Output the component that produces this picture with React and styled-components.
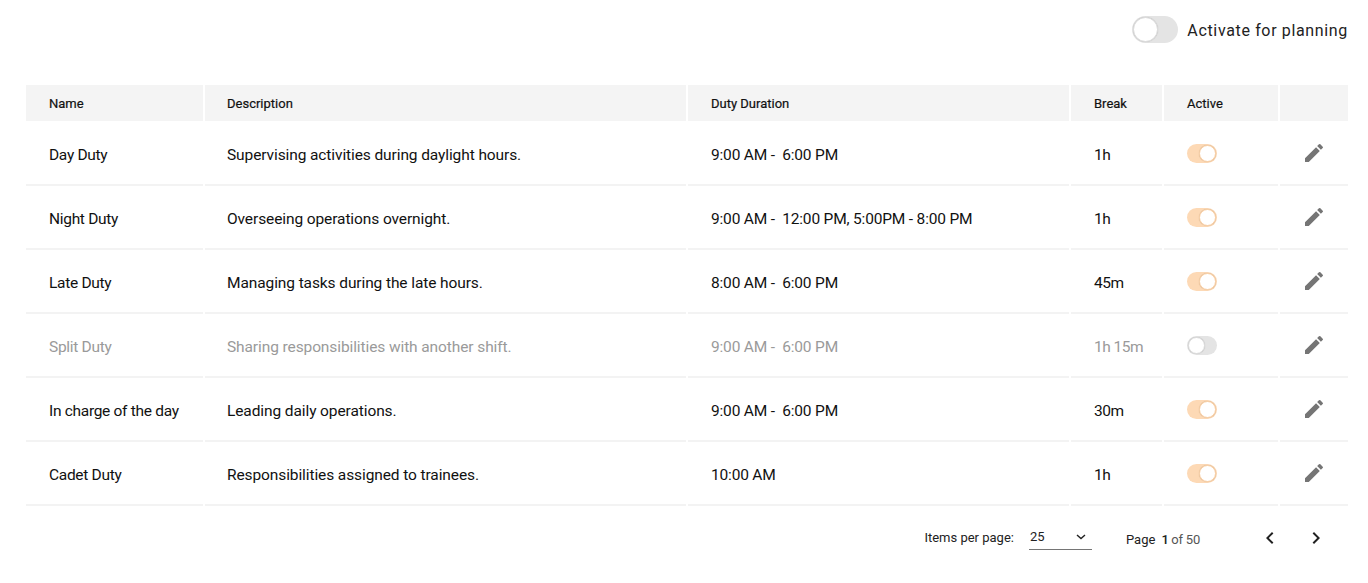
import styled, { createGlobalStyle } from 'styled-components';

const duties = [
  { name: 'Day Duty', description: 'Supervising activities during daylight hours.', duration: '9:00 AM -  6:00 PM', pause: '1h', active: true },
  { name: 'Night Duty', description: 'Overseeing operations overnight.', duration: '9:00 AM -  12:00 PM, 5:00PM - 8:00 PM', pause: '1h', active: true },
  { name: 'Late Duty', description: 'Managing tasks during the late hours.', duration: '8:00 AM -  6:00 PM', pause: '45m', active: true },
  { name: 'Split Duty', description: 'Sharing responsibilities with another shift.', duration: '9:00 AM -  6:00 PM', pause: '1h 15m', active: false },
  { name: 'In charge of the day', description: 'Leading daily operations.', duration: '9:00 AM -  6:00 PM', pause: '30m', active: true },
  { name: 'Cadet Duty', description: 'Responsibilities assigned to trainees.', duration: '10:00 AM', pause: '1h', active: true },
];

const PencilIcon = () => (
  <svg width="24" height="24" viewBox="0 0 24 24" fill="#757575">
    <path d="M3 17.25V21h3.75L17.81 9.94l-3.75-3.75L3 17.25zM20.71 7.04a1 1 0 0 0 0-1.41l-2.34-2.34a1 1 0 0 0-1.41 0l-1.83 1.83 3.75 3.75 1.83-1.83z" />
  </svg>
);

const Chevron = ({ dir }) => (
  <svg width="24" height="24" viewBox="0 0 24 24" fill="#212121">
    <path d={dir === 'left' ? 'M15.41 7.41 14 6l-6 6 6 6 1.41-1.41L10.83 12z' : 'M8.59 16.59 10 18l6-6-6-6-1.41 1.41L13.17 12z'} />
  </svg>
);

const App = () => {
  return (
    <>
      <GlobalStyle />
      <Page>
        <TopBar>
          <Toggle $large />
          <ToggleLabel>Activate for planning</ToggleLabel>
        </TopBar>
        <Table>
          <HeadCell>Name</HeadCell>
          <HeadCell $inset={22}>Description</HeadCell>
          <HeadCell>Duty Duration</HeadCell>
          <HeadCell>Break</HeadCell>
          <HeadCell>Active</HeadCell>
          <HeadCell />
          {duties.map((duty) => (
            <Row key={duty.name}>
              <TextCell $muted={!duty.active} $track={-0.3}>{duty.name}</TextCell>
              <TextCell $muted={!duty.active} $track={-0.1} $inset={22}>{duty.description}</TextCell>
              <TextCell $muted={!duty.active} $track={-0.18}>{duty.duration}</TextCell>
              <TextCell $muted={!duty.active} $track={-0.5}>{duty.pause}</TextCell>
              <Cell><Toggle $on={duty.active} /></Cell>
              <Cell $inset={22}><PencilIcon /></Cell>
            </Row>
          ))}
        </Table>
        <Pager>
          <PagerLabel>Items per page:</PagerLabel>
          <PageSelect>
            <span>25</span>
            <svg width="12" height="12" viewBox="0 0 12 12" fill="none" stroke="#212121" strokeWidth="1.4">
              <path d="M2 4l4 3.6L10 4" />
            </svg>
          </PageSelect>
          <PageInfo>
            Page <b>1</b> <span>of 50</span>
          </PageInfo>
          <PagerArrows>
            <Chevron dir="left" />
            <Chevron dir="right" />
          </PagerArrows>
        </Pager>
      </Page>
    </>
  );
};

const GlobalStyle = createGlobalStyle`
  body {
    margin: 0;
    background: #fff;
    font-family: Roboto, "Liberation Sans", sans-serif;
    color: #111;
  }
`;

const Page = styled.div`
  width: 1368px;
  height: 583px;
  padding: 16px 20px 0 26px;
  box-sizing: border-box;
  overflow: hidden;
`;

const TopBar = styled.div`
  display: flex;
  justify-content: flex-end;
  align-items: center;
  gap: 9px;
  height: 27px;
  margin-bottom: 42px;
`;

const ToggleLabel = styled.span`
  font-size: 16px;
  letter-spacing: 0.65px;
  color: #222;
  padding-top: 2px;
`;

const Toggle = styled.span`
  position: relative;
  display: inline-block;
  flex: none;
  width: ${(p) => (p.$large ? 46 : 30)}px;
  height: ${(p) => (p.$large ? 27 : 19)}px;
  border-radius: 14px;
  background: ${(p) => (p.$on ? '#fdd9b5' : '#e4e4e4')};

  &::after {
    content: '';
    position: absolute;
    box-sizing: border-box;
    top: 1px;
    left: ${(p) => (p.$on ? 'auto' : '1px')};
    right: ${(p) => (p.$on ? '1px' : 'auto')};
    width: ${(p) => (p.$large ? 25 : 17)}px;
    height: ${(p) => (p.$large ? 25 : 17)}px;
    border-radius: 50%;
    background: #fff;
    box-shadow: 0 0 1px rgba(0, 0, 0, 0.2);
    border: 0.5px solid ${(p) => (p.$on ? '#fbcfa2' : '#dcdcdc')};
  }
`;

const Table = styled.div`
  display: grid;
  grid-template-columns: 177px 481px 381px 91px 114px 68px;
  column-gap: 2px;
  width: 1322px;
`;

const HeadCell = styled.div`
  display: flex;
  align-items: center;
  height: 36px;
  margin-bottom: 1px;
  padding-left: ${(p) => p.$inset ?? 23}px;
  background: #f4f4f4;
  font-size: 13px;
  color: #111;
  -webkit-text-stroke: 0.2px #111;
`;

const Row = styled.div`
  display: contents;
`;

const Cell = styled.div`
  display: flex;
  align-items: center;
  height: 64px;
  box-sizing: border-box;
  padding-left: ${(p) => p.$inset ?? 23}px;
  border-bottom: 2px solid #f3f3f3;
`;

const TextCell = styled(Cell)`
  padding-top: 4px;
  font-size: 15.5px;
  letter-spacing: ${(p) => p.$track}px;
  white-space: pre;
  color: ${(p) => (p.$muted ? '#9a9a9a' : '#111')};
`;

const Pager = styled.div`
  display: flex;
  align-items: center;
  justify-content: flex-end;
  height: 62px;
  padding-right: 20px;
  font-size: 13px;
  color: #222;
`;

const PagerLabel = styled.span`
  margin-right: 15px;
`;

const PageSelect = styled.div`
  display: flex;
  align-items: center;
  justify-content: space-between;
  width: 63px;
  height: 25px;
  box-sizing: border-box;
  padding: 0 5px 0 1px;
  border-bottom: 1px solid #757575;
  margin-right: 34px;
`;

const PageInfo = styled.div`
  margin-top: 5px;
  margin-right: 58px;

  b {
    font-weight: 500;
    margin-left: 3px;
  }

  span {
    color: #555;
    margin-left: -1px;
    letter-spacing: -0.2px;
  }
`;

const PagerArrows = styled.div`
  display: flex;
  gap: 22px;
  margin-top: 2px;
`;

export default App;
